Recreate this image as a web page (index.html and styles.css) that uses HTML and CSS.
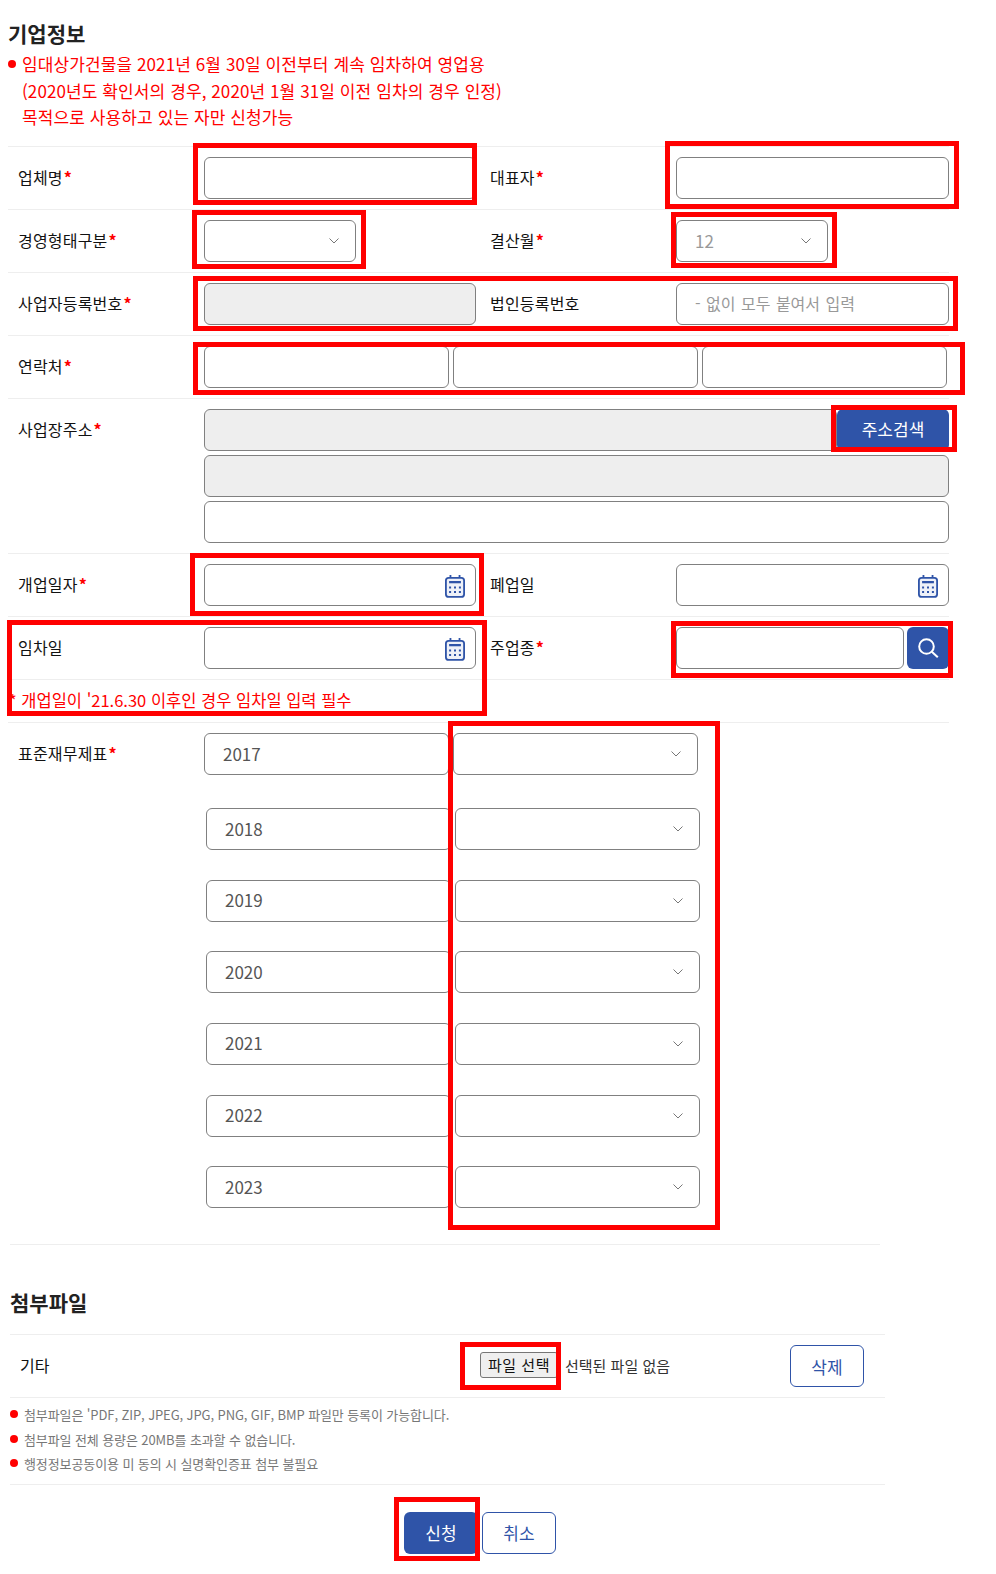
FILE: index.html
```html
<!DOCTYPE html>
<html lang="ko">
<head>
<meta charset="utf-8">
<title>기업정보</title>
<link rel="stylesheet" href="styles.css">
</head>
<body>
<svg class="sprite" width="0" height="0" aria-hidden="true">
  <symbol id="cal" viewBox="0 0 22 26">
    <path d="M6 1v5M16 1v5" fill="none" stroke="#2f54a8" stroke-width="2"/>
    <rect x="1" y="4" width="20" height="21" rx="3" fill="#eef1f8" stroke="#2f54a8" stroke-width="2"/>
    <rect x="4.5" y="7.5" width="13" height="2.5" fill="#2f54a8"/>
    <path d="M4.5 13.5h2.2v2.2H4.500zM9.900 13.500h2.200v2.200H9.900zM15.300 13.500h2.200v2.200h-2.200zM4.500 18.500h2.200v2.200H4.500zM9.900 18.500h2.200v2.200H9.900zM15.300 18.500h2.200v2.200h-2.200z" fill="#2f54a8"/>
  </symbol>
  <symbol id="chev" viewBox="0 0 10 6">
    <path d="M.5.5 5 5 9.500.5" fill="none" stroke="#777" stroke-width="1"/>
  </symbol>
</svg>

<main class="page">
  <section class="company">
    <h2 class="title">기업정보</h2>
    <ul class="notice">
      <li>임대상가건물을 2021년 6월 30일 이전부터 계속 임차하여 영업용<br>(2020년도 확인서의 경우, 2020년 1월 31일 이전 임차의 경우 인정)<br>목적으로 사용하고 있는 자만 신청가능</li>
    </ul>

    <div class="row">
      <div class="label">업체명<b>*</b></div>
      <div class="field"></div>
      <div class="label label-2">대표자<b>*</b></div>
      <div class="field"></div>
    </div>
    <div class="row">
      <div class="label">경영형태구분<b>*</b></div>
      <div class="field select select-sm"><svg class="chev"><use href="#chev"/></svg></div>
      <div class="label label-2">결산월<b>*</b></div>
      <div class="field select select-sm muted"><span class="val val-num">12</span><svg class="chev"><use href="#chev"/></svg></div>
    </div>
    <div class="row">
      <div class="label">사업자등록번호<b>*</b></div>
      <div class="field disabled"></div>
      <div class="label label-2">법인등록번호</div>
      <div class="field muted"><span class="val val-hint">- 없이 모두 붙여서 입력</span></div>
    </div>
    <div class="row row-wide">
      <div class="label">연락처<b>*</b></div>
      <div class="phones">
        <div class="field"></div>
        <div class="field"></div>
        <div class="field"></div>
      </div>
    </div>
    <div class="row row-wide">
      <div class="label">사업장주소<b>*</b></div>
      <div class="address">
        <div class="addr-line">
          <div class="field disabled grow"></div>
          <button class="btn btn-solid btn-addr" type="button">주소검색</button>
        </div>
        <div class="field disabled"></div>
        <div class="field"></div>
      </div>
    </div>
    <div class="row">
      <div class="label">개업일자<b>*</b></div>
      <div class="field date"><svg class="cal"><use href="#cal"/></svg></div>
      <div class="label label-2">폐업일</div>
      <div class="field date"><svg class="cal"><use href="#cal"/></svg></div>
    </div>
    <div class="row">
      <div class="label">임차일</div>
      <div class="field date"><svg class="cal"><use href="#cal"/></svg></div>
      <div class="label label-2">주업종<b>*</b></div>
      <div class="search">
        <div class="field grow"></div>
        <button class="btn-search" type="button" aria-label="검색">
          <svg width="21" height="20" viewBox="0 0 21 20"><circle cx="8.500" cy="8.500" r="7.300" fill="none" stroke="#fff" stroke-width="2"/><path d="m13.800 13.800 6 5.500" stroke="#fff" stroke-width="2"/></svg>
        </button>
      </div>
    </div>
    <div class="row-note">* 개업일이 '21.6.30 이후인 경우 임차일 입력 필수</div>

    <div class="row row-wide row-years">
      <div class="label">표준재무제표<b>*</b></div>
      <div class="year-line">
        <div class="field"><span class="val val-num">2017</span></div>
        <div class="field select"><svg class="chev"><use href="#chev"/></svg></div>
      </div>
    </div>
    <div class="years">
      <div class="year-line"><div class="field"><span class="val val-num">2018</span></div><div class="field select"><svg class="chev"><use href="#chev"/></svg></div></div>
      <div class="year-line"><div class="field"><span class="val val-num">2019</span></div><div class="field select"><svg class="chev"><use href="#chev"/></svg></div></div>
      <div class="year-line"><div class="field"><span class="val val-num">2020</span></div><div class="field select"><svg class="chev"><use href="#chev"/></svg></div></div>
      <div class="year-line"><div class="field"><span class="val val-num">2021</span></div><div class="field select"><svg class="chev"><use href="#chev"/></svg></div></div>
      <div class="year-line"><div class="field"><span class="val val-num">2022</span></div><div class="field select"><svg class="chev"><use href="#chev"/></svg></div></div>
      <div class="year-line"><div class="field"><span class="val val-num">2023</span></div><div class="field select"><svg class="chev"><use href="#chev"/></svg></div></div>
    </div>
  </section>

  <section class="attach">
    <h2 class="title title-attach">첨부파일</h2>
    <div class="file-row">
      <div class="file-label">기타</div>
      <button class="file-btn" type="button">파일 선택</button>
      <span class="file-none">선택된 파일 없음</span>
      <button class="btn btn-line btn-del" type="button">삭제</button>
    </div>
    <ul class="file-notes">
      <li>첨부파일은 'PDF, ZIP, JPEG, JPG, PNG, GIF, BMP 파일만 등록이 가능합니다.</li>
      <li>첨부파일 전체 용량은 20MB를 초과할 수 없습니다.</li>
      <li>행정정보공동이용 미 동의 시 실명확인증표 첨부 불필요</li>
    </ul>
    <div class="actions">
      <button class="btn btn-solid" type="button">신청</button>
      <button class="btn btn-line" type="button">취소</button>
    </div>
  </section>

  <div class="mark m1"></div>
  <div class="mark m2"></div>
  <div class="mark m3"></div>
  <div class="mark m4"></div>
  <div class="mark m5"></div>
  <div class="mark m6"></div>
  <div class="mark m7"></div>
  <div class="mark m8"></div>
  <div class="mark m9"></div>
  <div class="mark m10"></div>
  <div class="mark m11"></div>
  <div class="mark m12"></div>
  <div class="mark m13"></div>
</main>
</body>
</html>
```

FILE: styles.css
```css
* { box-sizing: border-box; }
html, body { margin: 0; padding: 0; background: #fff; }
body {
  font-family: "Noto Sans CJK KR", "Noto Sans", sans-serif;
  font-size: 16px;
  color: #222;
  overflow: hidden;
}
.sprite { position: absolute; }
.page { position: relative; height: 1574px; }

.company { margin-left: 8px; width: 941px; padding-top: 18px; }
.title { margin: 0; font-size: 21px; line-height: 30px; font-weight: 700; color: #222; }

.notice {
  list-style: none; margin: 0; padding: 3px 0 0 14px;
  height: 98px; color: #f00; font-size: 17px; letter-spacing: .1px; line-height: 26.5px; position: relative;
}
.notice li::before {
  content: ""; position: absolute; left: 0; top: 12px;
  width: 8px; height: 8px; border-radius: 50%; background: #f00;
}

.row {
  display: grid;
  grid-template-columns: 196px 272px 200px 273px;
  align-items: start;
  height: 63px;
  padding-top: 10px;
  border-top: 1px solid #eee;
}
.row-wide { grid-template-columns: 196px 745px; height: auto; padding-bottom: 10px; }
.label { padding-left: 10px; font-weight: 400; color: #111; line-height: 40px; white-space: nowrap; letter-spacing: .2px; }
.label-2 { padding-left: 14px; }
.label b { color: #f00; font-weight: 700; margin-left: 1px; }

.field {
  display: flex; align-items: center; justify-content: space-between;
  height: 42px; border: 1px solid #808080; border-radius: 6px; background: #fff;
  padding: 0 18px; color: #555;
}
.val { margin-bottom: 2px; }
.val-num { font-size: 17px; }
.val-hint { word-spacing: 1px; }
.grow { flex: 1; }
.disabled { background: #eee; }
.muted { color: #999; }
.select { justify-content: flex-end; padding-right: 16px; }
.select .val { margin-right: auto; }
.select-sm { width: 152px; }
.chev { width: 10px; height: 6px; flex: none; }
.date { justify-content: flex-end; padding-right: 10px; }
.cal { width: 20px; height: 24px; margin-top: 2px; }

.phones { display: grid; grid-template-columns: 245px 245px 245px; column-gap: 4px; }
.address { display: flex; flex-direction: column; gap: 4px; }
.addr-line { display: flex; }
.search { display: flex; gap: 3px; }
.field.grow { min-width: 0; }
.btn-search {
  width: 42px; height: 42px; padding: 0; border: 0; border-radius: 6px;
  background: #2f54a8; display: flex; align-items: center; justify-content: center;
}

.btn {
  width: 74px; height: 42px; border-radius: 6px; font: inherit; font-size: 17px; padding: 0;
}
.btn-solid { background: #2f54a8; color: #fff; border: 0; }
.btn-line { background: #fff; color: #2f54a8; border: 1px solid #2f54a8; }
.btn-addr { width: 112px; flex: none; padding-bottom: 4px; }

.row-note {
  border-top: 1px solid #eee; height: 43px; padding: 6px 0 0 1px;
  color: #f00; font-size: 16.5px; line-height: 28px;
}

.row-years { padding-bottom: 0; }
.year-line { display: grid; grid-template-columns: 245px 245px; column-gap: 4px; }
.years {
  display: flex; flex-direction: column; gap: 29.6px;
  margin: 33.2px 0 0 198px;
}

.attach { position: absolute; left: 10px; top: 1244px; width: 875px; }
.attach::before {
  content: ""; display: block; width: 870px; height: 1px; background: #eee;
}
.title-attach { margin-top: 42px; }
.file-row {
  display: flex; align-items: center; height: 64px; margin-top: 17px;
  border-top: 1px solid #eee; border-bottom: 1px solid #eee;
}
.file-label { margin-left: 10px; width: 460px; color: #111; margin-bottom: 2px; }
.file-btn {
  width: 78px; height: 26px; padding: 0 0 2px; font: inherit; font-size: 15px; letter-spacing: .5px;
  color: #111; background: #efefef; border: 1px solid #767676; border-radius: 3px; margin-bottom: 2px;
}
.file-none { margin-left: 7px; color: #333; font-size: 15px; margin-bottom: 2px; }
.btn-del { margin-left: auto; margin-right: 21px; }

.file-notes {
  list-style: none; margin: 0; padding: 5px 0 7px 14px;
  font-size: 13px; color: #777; line-height: 24.5px; border-bottom: 1px solid #eee;
  letter-spacing: -.1px;
}
.file-notes li { position: relative; }
.file-notes li::before {
  content: ""; position: absolute; left: -14px; top: 7px;
  width: 8px; height: 8px; border-radius: 50%; background: #f00;
}
.actions { display: flex; gap: 4px; margin: 27px 0 0 394px; }

.mark { position: absolute; border: 5px solid #f00; pointer-events: none; }
.m1 { left: 193px; top: 143px; width: 284px; height: 62px; }
.m2 { left: 192px; top: 210px; width: 174px; height: 59px; }
.m3 { left: 193px; top: 276px; width: 765px; height: 55px; }
.m4 { left: 665px; top: 141px; width: 294px; height: 68px; }
.m5 { left: 671px; top: 212px; width: 166px; height: 56px; }
.m6 { left: 193px; top: 342px; width: 772px; height: 53px; }
.m7 { left: 831px; top: 405px; width: 126px; height: 47px; }
.m8 { left: 190px; top: 553px; width: 294px; height: 63px; }
.m9 { left: 7px; top: 620px; width: 480px; height: 96px; }
.m10 { left: 671px; top: 621px; width: 282px; height: 57px; }
.m11 { left: 448px; top: 721px; width: 272px; height: 509px; }
.m12 { left: 460px; top: 1342px; width: 101px; height: 48px; }
.m13 { left: 394px; top: 1497px; width: 86px; height: 64px; }
```
